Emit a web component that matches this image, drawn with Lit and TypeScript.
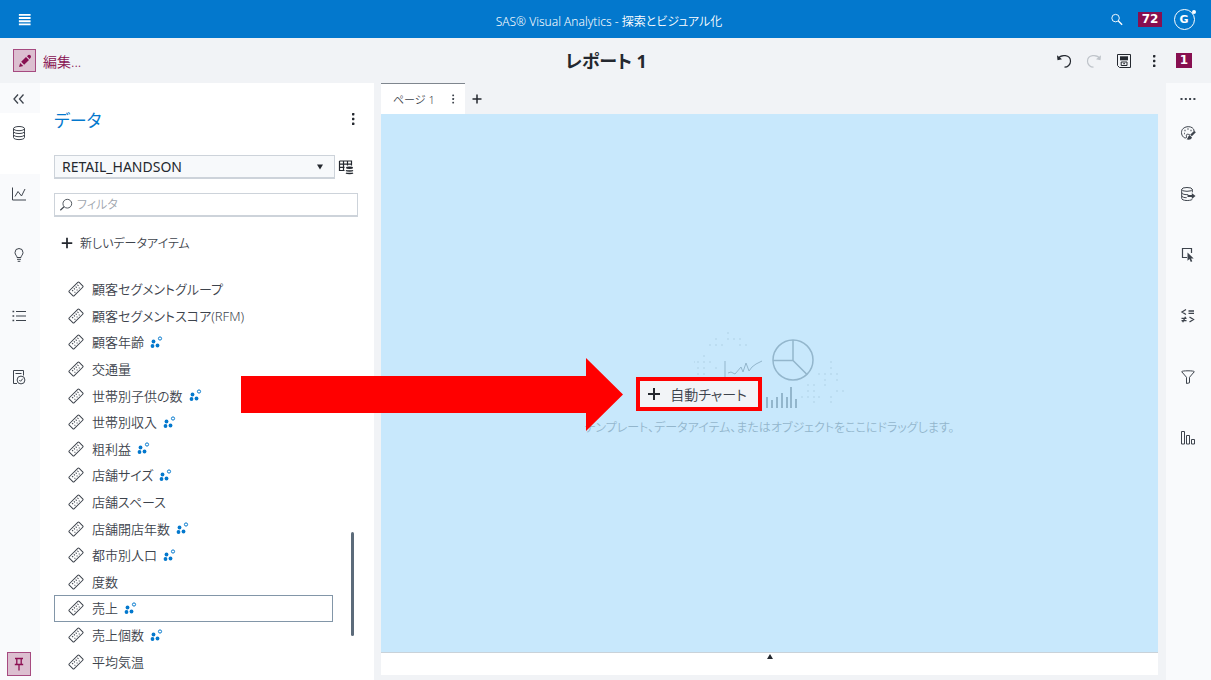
import { LitElement, html, css, svg, nothing } from "lit";
import { customElement, property, state } from "lit/decorators.js";
import { classMap } from "lit/directives/class-map.js";

const icons: Record<string, unknown> = {
  menu: svg`<path d="M2 3h12.500M2 6.400h12.500M2 9.800h12.500M2 13.200h12.500" stroke-width="2"/>`,
  pencil: svg`<path d="M2 14l1.200-4 3 3z M4.200 8.800L9 4l3 3-4.800 4.800z M10 3.200l1.200-1.200q1.200-.8 2.200.2t.4 2.400l-1.100 1.300z" fill="currentColor" stroke="none"/>`,
  collapse: svg`<path d="M7 3.500L3 8l4 4.500M12.500 3.500L8.500 8l4 4.500" stroke-width="1.300"/>`,
  data: svg`<ellipse cx="8" cy="3.600" rx="5.500" ry="2.100"/><path d="M2.500 3.600v2.800c0 2.800 11 2.800 11 0V3.600M2.500 6.600v3c0 2.800 11 2.800 11 0v-3M2.500 9.800v2.700c0 2.800 11 2.800 11 0V9.800"/>`,
  chart: svg`<path d="M1.500 1.500v12.500h13.500M4 10.500l3-5 3.500 4.500L14 3"/>`,
  bulb: svg`<path d="M6 10.500c0-2-2-2.500-2-5a4 4 0 0 1 8 0c0 2.500-2 3-2 5zM6 12.300h4M6.700 14.300h2.600"/>`,
  list: svg`<path d="M5 3.500h10M5 8h10M5 12.500h10" stroke-width="1.200"/><path d="M1.500 3.500h1.700M1.500 8h1.700M1.500 12.500h1.700" stroke-width="1.700"/>`,
  history: svg`<path d="M6 14.500H2.500v-13h10v5M4.500 4.500h6"/><circle cx="10" cy="11" r="3.900"/><path d="M8.300 11l1.300 1.300 2.200-2.700"/>`,
  pin: svg`<path d="M4 2.500h8M5.800 2.500v5.500M10.200 2.500v5.500M3.800 8.500h8.400M8 8.500v6" stroke-width="1.300"/>`,
  search: svg`<circle cx="7" cy="6.500" r="4"/><path d="M10 9.500l4 4" stroke-width="1.500"/>`,
  filterSearch: svg`<circle cx="9.500" cy="6.500" r="5"/><path d="M5.800 10L1.500 14" stroke-width="1.300"/>`,
  undo: svg`<path d="M2.200 5.500C5 1 14.500 1.500 14.500 8.200c0 3.500-2.800 6-6 6" stroke-width="1.200"/><path d="M1 2.300l.5 5L6 6.200z" fill="currentColor" stroke="none"/>`,
  redo: svg`<path d="M13.800 5.500C11 1 1.500 1.500 1.500 8.200c0 3.500 2.800 6 6 6" stroke-width="1.200"/><path d="M15 2.300l-.5 5L10 6.200z" fill="currentColor" stroke="none"/>`,
  save: svg`<path d="M1.500 1.500h13v13H3.500l-2-2z"/><path d="M4 3.300h8v4H4z" fill="currentColor" stroke="none"/><path d="M5.200 9h5.800v3.500H5.200zM7.200 10.700h1.800"/>`,
  kebab: svg`<g fill="currentColor" stroke="none"><rect x="7" y="2" width="2.400" height="2.400" rx=".6"/><rect x="7" y="6.800" width="2.400" height="2.400" rx=".6"/><rect x="7" y="11.600" width="2.400" height="2.400" rx=".6"/></g>`,
  dots: svg`<g fill="currentColor" stroke="none"><rect x=".5" y="7" width="2" height="2"/><rect x="4.800" y="7" width="2" height="2"/><rect x="9.100" y="7" width="2" height="2"/><rect x="13.400" y="7" width="2" height="2"/></g>`,
  plus: svg`<path d="M8 2v12M2 8h12" stroke-width="2"/>`,
  tableData: svg`<path d="M1.500 2h12v4.500M1.500 2v9.500h5M1.500 5.200h12M1.500 8.400h5M5.500 2v9.500M9.500 2v4.500" stroke-width="1.200"/><ellipse cx="11.500" cy="8.700" rx="3.500" ry="1.200" fill="currentColor" stroke="none"/><path d="M8 11.500c1 .8 6 .8 7 0M8 14c1 .8 6 .8 7 0" stroke-width="1.500"/>`,
  palette: svg`<path d="M6.500 12.500C5 14 1.500 11.500 1.500 7.500c0-7.500 12.500-7.500 12.500-1.500M6.500 12.500c.5-1-.8-2 .2-3 1-.8 2.300.3 3 0"/><path d="M4.500 5.500h1M7.500 4h1M10.500 5.500h1M4 8.500h.8" stroke-width="1.300"/><path d="M15 6.500L11 10.500" stroke-width="2.400"/><path d="M9.500 10l2.500 2.500c-.8 2.500-3.500 2.500-5.500 1.800 1.500-.5 1.200-3 3-4.300z" fill="currentColor" stroke="none"/>`,
  dataOut: svg`<ellipse cx="7" cy="3.400" rx="5.300" ry="1.900"/><path d="M1.700 3.400v9c0 2.400 8 2.800 10.600 1M12.300 3.400v3M1.700 6.500c0 1.800 4 2.400 6.500 2M1.700 9.700c0 1.500 3 2 5 2"/><path d="M7.500 10h5" stroke-width="2"/><path d="M11.800 7l3.700 3-3.700 3z" fill="currentColor" stroke="none"/>`,
  action: svg`<path d="M7 10.500H2.500v-9h9V6" stroke-width="1.200"/><path d="M7.500 5.500v8.300l2-1.800 1.300 3 1.500-.700-1.300-2.800h2.700z" fill="currentColor" stroke="none"/>`,
  rules: svg`<path d="M6 1.500L2 4l4 2.500M8.500 3h5.500M8.500 5.300h5.500M9.500 9l4 2.500-4 2.500M1.500 10.300h5M1.500 12.700h5M5.500 8.700L2.700 14.300" stroke-width="1.300"/>`,
  funnel: svg`<path d="M1.700 2.700c0-1.200 12.600-1.200 12.600 0L9.500 8.300v5.500l-3 .7V8.300z"/>`,
  ranks: svg`<path d="M1.500 1.500h3v12.500h-3zM6.500 5.500h3v8.500h-3zM11.500 9.500h3v4.500h-3z"/>`,
  measure: svg`<g transform="rotate(-45 8 8)"><rect x="1" y="4.500" width="14" height="7" rx="1"/><path d="M4.500 6v1.500M7 6v1.500M9.500 6v1.500M12 6v1.500M4.500 9.500h1M7.500 9.500h1M10.500 9.500h1"/></g>`,
};

const icon = (name: string, size = 16) => html`<svg
  width=${size} height=${size} viewBox="0 0 16 16" fill="none"
  stroke="currentColor" stroke-width="1" aria-hidden="true">${icons[name]}</svg>`;

const baseStyles = css`
  * { box-sizing: border-box; }
  svg { display: block; flex: none; }
  button, input, select {
    font: inherit;
    font-feature-settings: inherit;
    color: inherit;
    margin: 0;
    padding: 0;
    border: 0;
    background: none;
  }
  button { display: flex; align-items: center; justify-content: center; }
`;

interface RailItem { icon: string; label: string; active?: boolean }

@customElement("tool-rail")
export class ToolRail extends LitElement {
  @property() side = "left";
  @property({ attribute: false }) items: RailItem[] = [];

  static styles = [baseStyles, css`
    :host { display: flex; flex-direction: column; background: #f9fafc; color: #3d434c; }
    .toggle { height: 31px; margin-bottom: -1px; padding-right: 2px; }
    .item { height: 61px; align-items: flex-start; padding: 12px 2px 0 0; }
    .active { background: #fff; }
    .pin {
      margin: auto auto 4px 7px;
      width: 24px;
      height: 24px;
      color: #8c0f52;
      background: #dcbfd0;
      border: 1px solid #a64a80;
    }
  `];

  render() {
    const left = this.side === "left";
    return html`
      <button class="toggle" aria-label="切り替え">${icon(left ? "collapse" : "dots")}</button>
      ${this.items.map((i) => html`
        <button class=${classMap({ item: true, active: !!i.active })} aria-label=${i.label}>${icon(i.icon)}</button>`)}
      ${left ? html`<button class="pin" aria-label="固定">${icon("pin")}</button>` : nothing}
    `;
  }
}

interface DataItem { name: string; related?: boolean }

@customElement("data-panel")
export class DataPanel extends LitElement {
  @state() private selected = "売上";

  private items: DataItem[] = [
    { name: "顧客セグメントグループ" },
    { name: "顧客セグメントスコア(RFM)" },
    { name: "顧客年齢", related: true },
    { name: "交通量" },
    { name: "世帯別子供の数", related: true },
    { name: "世帯別収入", related: true },
    { name: "粗利益", related: true },
    { name: "店舗サイズ", related: true },
    { name: "店舗スペース" },
    { name: "店舗開店年数", related: true },
    { name: "都市別人口", related: true },
    { name: "度数" },
    { name: "売上", related: true },
    { name: "売上個数", related: true },
    { name: "平均気温" },
  ];

  static styles = [baseStyles, css`
    :host {
      display: flex;
      flex-direction: column;
      position: relative;
      background: #fff;
      padding: 0 16px 5px 14px;
      color: #3d434c;
    }
    .head { display: flex; align-items: center; justify-content: space-between; height: 72px; color: #24282f; }
    .head button { width: 10px; }
    h2 { margin: 0; font-size: 17px; font-weight: 400; color: #0378cd; }
    .source { display: flex; align-items: center; gap: 3px; }
    .select { display: grid; flex: 1; align-items: center; }
    .select > * { grid-area: 1 / 1; }
    .select svg { justify-self: end; margin-right: 12px; pointer-events: none; }
    select {
      appearance: none;
      height: 24px;
      padding: 0 7px;
      border: 1px solid #cdd3da;
      border-bottom-width: 2px;
      border-radius: 0;
      background: #f7f9fb;
      color: #24282f;
      font-size: 14px;
      font-weight: 400;
    }
    .source button { width: 20px; justify-content: flex-start; color: #24282f; }
    .filter {
      display: flex;
      align-items: center;
      gap: 4px;
      height: 24px;
      margin-top: 14px;
      padding: 0 4px;
      border: 1px solid #cdd3da;
      border-bottom-width: 2px;
    }
    input { flex: 1; min-width: 0; outline: 0; font-size: 12px; }
    input::placeholder { color: #a0a6ae; opacity: 1; }
    .new { align-self: flex-start; gap: 6px; height: 32px; margin: 10px 0 17px 6px; font-size: 12px; }
    .new svg { color: #24282f; }
    ul {
      flex: 1;
      display: grid;
      grid-auto-rows: 1fr;
      margin: 0 25px 0 0;
      padding: 0;
      list-style: none;
      font-size: 13px;
      line-height: 20px;
    }
    li { display: flex; }
    .row { flex: 1; justify-content: flex-start; padding-left: 13px; border: 1px solid transparent; }
    .row.on { border-color: #8296a8; }
    .name { margin: 0 6px 0 8px; white-space: nowrap; }
    .thumb {
      position: absolute;
      right: 20px;
      bottom: 44px;
      width: 3px;
      height: 104px;
      border-radius: 2px;
      background: #5c6b7a;
    }
  `];

  render() {
    return html`
      <div class="head"><h2>データ</h2><button aria-label="メニュー">${icon("kebab")}</button></div>
      <div class="source">
        <div class="select">
          <select aria-label="データソース"><option>RETAIL_HANDSON</option></select>
          <svg width="6" height="6" viewBox="0 0 6 6" aria-hidden="true"><path d="M0 .5h6l-3 5z" fill="#24282f"/></svg>
        </div>
        <button aria-label="データテーブル">${icon("tableData")}</button>
      </div>
      <label class="filter">${icon("filterSearch", 14)}<input type="text" aria-label="フィルタ" placeholder="フィルタ"></label>
      <button class="new">${icon("plus", 14)}<span>新しいデータアイテム</span></button>
      <ul>
        ${this.items.map((d) => html`<li>
          <button class=${classMap({ row: true, on: d.name === this.selected })} @click=${() => (this.selected = d.name)}>
            ${icon("measure")}<span class="name">${d.name}</span>
            ${d.related ? html`<svg width="13" height="13" viewBox="0 0 13 13" fill="#0378cd" aria-hidden="true">
              <circle cx="3.500" cy="5.500" r="1.900"/><circle cx="2.500" cy="10" r="1.900"/><circle cx="7.500" cy="9.500" r="1.900"/>
              <circle cx="10" cy="2.500" r="1.600" fill="none" stroke="#0378cd"/></svg>` : nothing}
          </button></li>`)}
      </ul>
      <div class="thumb"></div>
    `;
  }
}

@customElement("report-canvas")
export class ReportCanvas extends LitElement {
  static styles = [baseStyles, css`
    :host { display: flex; flex-direction: column; min-width: 0; padding: 0 8px 5px 7px; color: #3d434c; }
    .tabs { display: flex; height: 31px; }
    .tab {
      display: flex;
      align-items: center;
      gap: 12px;
      width: 84px;
      padding-left: 12px;
      background: #fff;
      border-top: 1px solid #7f868e;
    }
    .tab button { font-size: 11px; white-space: nowrap; }
    .add { width: 24px; color: #24282f; }
    .drop {
      flex: 1;
      display: grid;
      place-content: center;
      justify-items: center;
      padding-top: 6px;
      background: #c8e8fc;
    }
    .art { position: relative; width: 150px; height: 84px; color: #93b6cc; }
    .auto {
      position: absolute;
      left: -58px;
      top: 46px;
      width: 126px;
      height: 34px;
      border: 4px solid #f00;
      background: #f2f4f7;
      color: #3d434c;
      gap: 8px;
      padding-right: 6px;
      font-size: 14px;
      white-space: nowrap;
    }
    .auto svg { color: #24282f; }
    .arrow { position: absolute; right: 221px; top: 27px; z-index: 2; }
    .hint { margin: 0; font-size: 12px; line-height: 26px; color: #93b6cc; white-space: nowrap; }
    .drawer { height: 23px; background: #fff; border-top: 1px solid #c9d2d9; align-items: flex-start; padding-top: 1px; }
  `];

  render() {
    const dots = [
      [34, 2], [22, 8], [34, 8], [40, 8], [46, 8], [16, 14], [22, 14], [28, 14], [46, 14], [52, 14],
      [10, 25], [4, 31], [0, 31], [10, 31], [16, 31], [4, 37], [10, 37], [22, 37], [4, 43], [10, 43],
      [137, 31], [137, 37], [125, 43], [131, 43], [137, 43], [143, 43], [131, 49], [143, 49],
      [114, 54], [120, 54], [131, 54], [114, 60], [120, 60], [143, 60], [149, 60],
      [108, 66], [114, 66], [120, 66], [125, 66], [137, 66], [120, 71], [137, 71],
    ];
    const bars = [[73, 66], [78, 69], [83, 66], [88, 62], [93, 66], [97, 56], [102, 68]];
    return html`
      <div class="tabs">
        <div class="tab"><button>ページ 1</button><button aria-label="ページメニュー">${icon("kebab", 12)}</button></div>
        <button class="add" aria-label="ページの追加">${icon("plus", 12)}</button>
      </div>
      <div class="drop">
        <div class="art">
          <svg width="150" height="84" viewBox="0 0 150 84" fill="none" stroke="currentColor" aria-hidden="true">
            ${dots.map(([x, y]) => svg`<circle cx=${x} cy=${y} r=".8" fill="currentColor" stroke="none" opacity=".5"/>`)}
            <path d="M31 30v24M34 42l3-1 4 2 6-7 2 5 3-9 3 8 3-4 4-3 6-3"/>
            <circle cx="99" cy="29" r="20" stroke-width="1.500"/>
            <path d="M99 9v21M79 29.500h20l14 14" stroke-width="1.500"/>
            ${bars.map(([x, y]) => svg`<path d="M${x} ${y}V77" stroke-width="2"/>`)}
          </svg>
          <button class="auto">${icon("plus", 16)}<span>自動チャート</span></button>
          <svg class="arrow" width="382" height="73" viewBox="0 0 382 73" aria-hidden="true">
            <path d="M0 18h345V0l37 36.500L345 73V55H0z" fill="#f00"/>
          </svg>
        </div>
        <p class="hint">テンプレート、データアイテム、またはオブジェクトをここにドラッグします。</p>
      </div>
      <button class="drawer" aria-label="開く">
        <svg width="6" height="5" viewBox="0 0 6 5"><path d="M0 5h6L3 0z" fill="#24282f"/></svg>
      </button>
    `;
  }
}

@customElement("app-root")
export class AppRoot extends LitElement {
  private left: RailItem[] = [
    { icon: "data", label: "データ", active: true },
    { icon: "chart", label: "オブジェクト" },
    { icon: "bulb", label: "提案" },
    { icon: "list", label: "アウトライン" },
    { icon: "history", label: "レビュー" },
  ];
  private right: RailItem[] = [
    { icon: "palette", label: "オプション" },
    { icon: "dataOut", label: "役割" },
    { icon: "action", label: "アクション" },
    { icon: "rules", label: "ルール" },
    { icon: "funnel", label: "フィルタ" },
    { icon: "ranks", label: "ランク" },
  ];

  static styles = [baseStyles, css`
    :host {
      display: flex;
      flex-direction: column;
      min-height: 100vh;
      background: #f1f3f6;
      color: #24282f;
      font-family: "Noto Sans", "Noto Sans CJK JP", sans-serif;
      font-feature-settings: "palt";
      font-size: 13px;
      font-weight: 350;
    }
    header, .bar { display: grid; grid-template-columns: 1fr auto 1fr; align-items: center; }
    header { height: 38px; padding: 0 10px 0 17px; background: #0378cd; color: #fff; }
    .app { font-size: 12px; margin-top: 3px; }
    .group { display: flex; justify-content: flex-end; align-items: center; }
    header .group > * { width: 34px; }
    .bar { height: 45px; padding: 0 12px 0 13px; }
    .bar .group > * { width: 30px; }
    h1 { margin: 0; font-size: 18px; font-weight: 700; line-height: 24px; }
    .badge { display: block; margin: 0 auto; padding: 0 4px; background: #870f50; color: #fff; font: 700 12px/15px "DejaVu Sans", sans-serif; }
    .num { display: flex; }
    .avatar { position: relative; }
    .ring {
      width: 21px;
      height: 21px;
      border: 1px solid #fff;
      border-radius: 50%;
      font: 700 11px/19px "DejaVu Sans", sans-serif;
      text-align: center;
    }
    .status { position: absolute; right: 5px; top: 1px; width: 4px; height: 4px; border-radius: 50%; background: #fff; }
    .edit { justify-self: start; gap: 7px; color: #870f50; font-size: 14px; }
    .box { display: grid; place-items: center; width: 23px; height: 23px; background: #dcbfd0; border: 1px solid #a64a80; }
    .off { color: #bfc4ca; }
    main { flex: 1; display: grid; grid-template-columns: 40px 334px minmax(0, 1fr) 45px; }
  `];

  render() {
    return html`
      <header>
        <div><button aria-label="メニュー">${icon("menu", 15)}</button></div>
        <div class="app">SAS® Visual Analytics - 探索とビジュアル化</div>
        <div class="group">
          <button aria-label="検索">${icon("search", 15)}</button>
          <div class="num"><span class="badge">72</span></div>
          <button class="avatar" aria-label="ユーザー"><span class="ring">G</span><span class="status"></span></button>
        </div>
      </header>
      <div class="bar">
        <button class="edit"><span class="box">${icon("pencil")}</span>編集...</button>
        <h1>レポート 1</h1>
        <div class="group">
          <button aria-label="元に戻す">${icon("undo")}</button>
          <button class="off" aria-label="やり直し">${icon("redo")}</button>
          <button aria-label="保存">${icon("save")}</button>
          <button aria-label="その他">${icon("kebab")}</button>
          <div class="num"><span class="badge">1</span></div>
        </div>
      </div>
      <main>
        <tool-rail side="left" .items=${this.left}></tool-rail>
        <data-panel></data-panel>
        <report-canvas></report-canvas>
        <tool-rail side="right" .items=${this.right}></tool-rail>
      </main>
    `;
  }
}
